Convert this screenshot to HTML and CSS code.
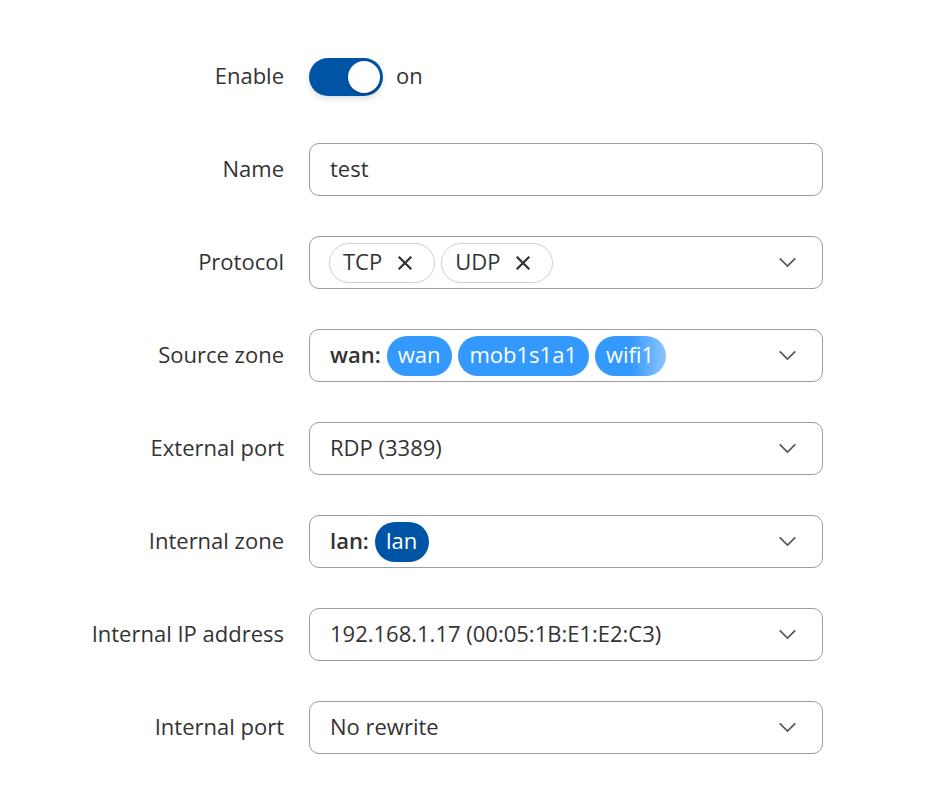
FILE: index.html
```html
<!DOCTYPE html>
<html>
<head>
<meta charset="utf-8">
<link rel="stylesheet" href="styles.css">
</head>
<body>
<form class="form">
  <div class="row">
    <label class="label">Enable</label>
    <div class="field toggle-field">
      <span class="toggle"><span class="knob"></span></span>
      <span class="toggle-text">on</span>
    </div>
  </div>
  <div class="row">
    <label class="label">Name</label>
    <div class="field box"><span class="value">test</span></div>
  </div>
  <div class="row">
    <label class="label">Protocol</label>
    <div class="field box select">
      <div class="chips">
        <span class="chip">TCP <svg class="x" viewBox="0 0 14 14"><path d="M1.5 1.5L12.5 12.5M12.5 1.5L1.5 12.5"/></svg></span>
        <span class="chip">UDP <svg class="x" viewBox="0 0 14 14"><path d="M1.5 1.5L12.5 12.5M12.5 1.5L1.5 12.5"/></svg></span>
      </div>
      <svg class="chev" viewBox="0 0 20 12"><path d="M1.5 1.5L10 10L18.5 1.5"/></svg>
    </div>
  </div>
  <div class="row">
    <label class="label">Source zone</label>
    <div class="field box select">
      <div class="chips">
        <span class="zone">wan:</span>
        <span class="pill light">wan</span>
        <span class="pill light">mob1s1a1</span>
        <span class="pill light fade">wifi1</span>
      </div>
      <svg class="chev" viewBox="0 0 20 12"><path d="M1.5 1.5L10 10L18.5 1.5"/></svg>
    </div>
  </div>
  <div class="row">
    <label class="label">External port</label>
    <div class="field box select">
      <span class="value">RDP (3389)</span>
      <svg class="chev" viewBox="0 0 20 12"><path d="M1.5 1.5L10 10L18.5 1.5"/></svg>
    </div>
  </div>
  <div class="row">
    <label class="label">Internal zone</label>
    <div class="field box select">
      <div class="chips">
        <span class="zone">lan:</span>
        <span class="pill dark">lan</span>
      </div>
      <svg class="chev" viewBox="0 0 20 12"><path d="M1.5 1.5L10 10L18.5 1.5"/></svg>
    </div>
  </div>
  <div class="row">
    <label class="label">Internal IP address</label>
    <div class="field box select">
      <span class="value">192.168.1.17 (00:05:1B:E1:E2:C3)</span>
      <svg class="chev" viewBox="0 0 20 12"><path d="M1.5 1.5L10 10L18.5 1.5"/></svg>
    </div>
  </div>
  <div class="row">
    <label class="label">Internal port</label>
    <div class="field box select">
      <span class="value">No rewrite</span>
      <svg class="chev" viewBox="0 0 20 12"><path d="M1.5 1.5L10 10L18.5 1.5"/></svg>
    </div>
  </div>
</form>
</body>
</html>
```
FILE: styles.css
```css
html, body {
  margin: 0;
  padding: 0;
  background: #ffffff;
}
body {
  font-family: "Open Sans", "Noto Sans", sans-serif;
  font-size: 22px;
  color: #333333;
}
.form {
  display: flex;
  flex-direction: column;
  gap: 40px;
  padding: 50px 0 0 0;
}
.row {
  display: flex;
  align-items: center;
  height: 53px;
}
.label {
  text-align: right;
  padding: 0 25px 3px 0;
  box-sizing: border-box;
  flex: none;
  width: 309px;
  color: #333333;
}
.field {
  width: 514px;
  height: 53px;
  box-sizing: border-box;
  display: flex;
  align-items: center;
}
.value,
.toggle-text,
.zone {
  padding-bottom: 3px;
}
.toggle-field {
  gap: 13px;
}
.toggle {
  width: 74px;
  height: 38px;
  border-radius: 19px;
  background: #0054a6;
  display: flex;
  align-items: center;
  justify-content: flex-end;
  padding-right: 3px;
  box-sizing: border-box;
  box-shadow: 0 3px 6px rgba(0, 0, 0, 0.12);
}
.knob {
  width: 32px;
  height: 32px;
  border-radius: 50%;
  background: #ffffff;
  box-shadow: 0 1px 3px rgba(0, 0, 0, 0.25);
}
.toggle-text {
  color: #333333;
}
.box {
  border: 1px solid #9c9c9c;
  border-radius: 10px;
  padding: 0 25px 0 20px;
}
.select {
  justify-content: space-between;
}
.chips {
  display: flex;
  align-items: center;
  gap: 6px;
  margin-left: -1px;
}
.chip {
  display: inline-flex;
  align-items: center;
  gap: 15px;
  height: 40px;
  box-sizing: border-box;
  border: 1px solid #cfcfcf;
  border-radius: 20px;
  padding: 0 21px 3px 13px;
}
.x {
  width: 16px;
  height: 16px;
  stroke: #333333;
  stroke-width: 2;
  fill: none;
  margin-top: 3px;
}
.zone {
  font-weight: 600;
  margin-left: 1px;
  margin-right: 0;
}
.pill {
  display: inline-flex;
  align-items: center;
  height: 40px;
  border-radius: 20px;
  padding: 0 12px 3px 11px;
  color: #ffffff;
  font-weight: 500;
  box-sizing: border-box;
}
.pill.light {
  background: #3399ff;
}
.pill.fade {
  background: linear-gradient(to right, #3399ff 50%, #8cc5ff 100%);
}
.pill.dark {
  background: #0054a6;
}
.chev {
  width: 19px;
  height: 11px;
  stroke: #555555;
  stroke-width: 1.8;
  fill: none;
  flex: none;
}
```
